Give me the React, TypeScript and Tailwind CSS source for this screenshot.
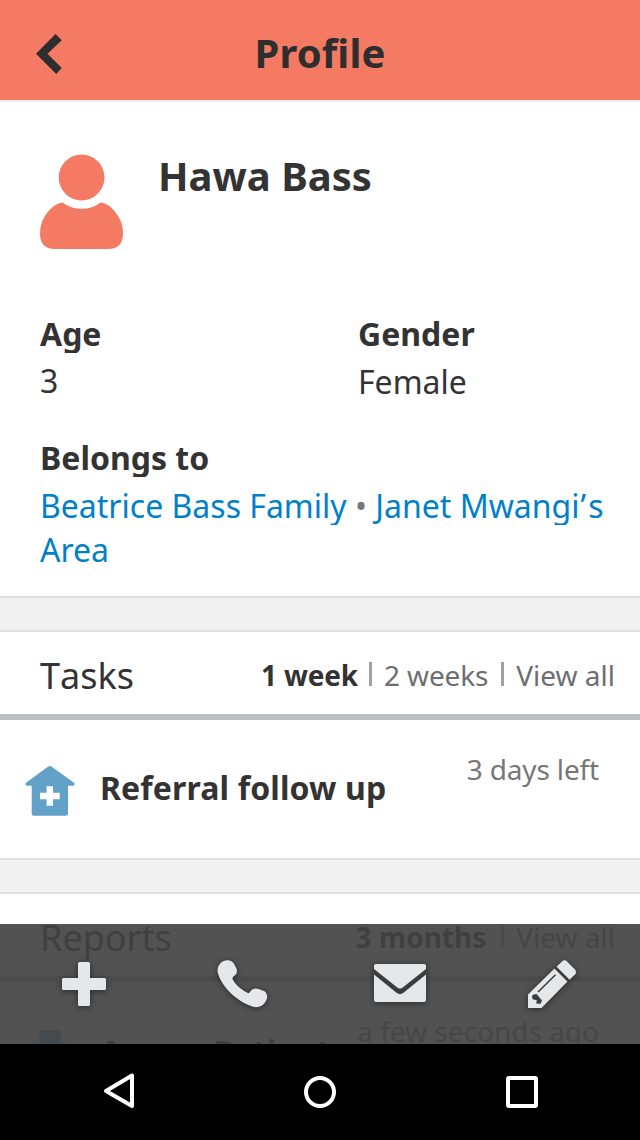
import React from "react";

function BackIcon() {
  return (
    <svg width="26" height="40" viewBox="36 34 26 40" fill="#2e2e2e">
      <path d="M55.5 34 L61.8 40.2 L47.5 53.7 L61.8 68 L56.2 74 L36 53.7 Z" />
    </svg>
  );
}

function PersonIcon() {
  return (
    <svg width="84" height="95" viewBox="40 154 84 95" fill="#f47a63">
      <circle cx="81.6" cy="177.5" r="22.9" />
      <path d="M62.5 202.5 Q71 208.8 81.6 208.8 Q92.5 208.8 100.5 202.5 Q108 203 114.5 211 Q123 221 123 233 C123 244 118 249 108 249 L55 249 C45 249 40 244 40 233 Q40 221 48.500 211 Q55.500 203 62.500 202.500 Z" />
    </svg>
  );
}

function HouseIcon() {
  return (
    <svg width="50" height="50" viewBox="25 766 50 50" fill="#63a2c8">
      <path
        fillRule="evenodd"
        d="M48.200 766.500 Q49.800 765.500 51.400 766.500 L74 782.800 Q75.600 784.800 73 785.700 L68 785.700 L68 813.500 Q68 815.700 65.800 815.700 L34 815.700 Q31.700 815.700 31.700 813.500 L31.700 785.700 L27 785.700 Q24.400 784.800 26 782.800 Z M46.600 786.300 V792.700 H40 V799.300 H46.600 V805.700 H53 V799.300 H59.700 V792.700 H53 V786.300 Z"
      />
    </svg>
  );
}

function CrossIcon() {
  return (
    <svg width="50" height="50" viewBox="0 0 50 50" fill="#63a2c8">
      <path d="M16 0 H34 Q36 0 36 3 V13.500 H46 Q48 13.500 48 16 V33 Q48 36 46 36 H36 V47 Q36 50 34 50 H16 Q14.300 50 14.300 47 V36 H4 Q2 36 2 33 V16 Q2 13.500 4 13.500 H14.300 V3 Q14.300 0 16 0 Z" />
    </svg>
  );
}

function Heading({ children }: { children: React.ReactNode }) {
  return <div className="h-[38px] overflow-hidden text-[32px] leading-[38px] font-bold">{children}</div>;
}

function Divider() {
  return <div className="h-9 shrink-0 border-y-2 border-[#e0e0e0] bg-[#f1f1f1]" />;
}

function Bar() {
  return <span className="mb-[2px] h-6 w-[3px] bg-[#a0a1a3]" />;
}

const shadow = "overflow-visible drop-shadow-[0_1px_3px_rgba(0,0,0,0.5)]";

function ActionBar() {
  return (
    <div className="absolute inset-x-0 bottom-0 grid h-[120px] grid-cols-[168px_148px_168px_1fr] bg-[#414141]/91">
      <div className="flex justify-center pt-[38px]">
        <svg className={shadow} width="44" height="44" viewBox="0 0 44 44" fill="#e6e7e8">
          <path d="M17.500 0 H26.500 Q28 0 28 1.500 V16 H42.500 Q44 16 44 17.500 V26.500 Q44 28 42.500 28 H28 V42.500 Q28 44 26.500 44 H17.500 Q16 44 16 42.500 V28 H1.500 Q0 28 0 26.500 V17.500 Q0 16 1.500 16 H16 V1.500 Q16 0 17.500 0 Z" />
        </svg>
      </div>
      <div className="flex justify-center pt-9">
        <svg className={shadow} width="50" height="48" viewBox="217 960 50 48" fill="#e6e7e8">
          <path d="M226.500 960.300 Q231 959.500 233.500 963 L236.200 968 Q238 972 235.500 974.800 Q233 976.600 232.300 978.500 C235 984.500 241.500 990 248.500 993.200 Q250 992.500 251.500 990 Q254.500 987.600 258.500 989 L264.500 991.300 Q267.800 993.300 267 998 C265.500 1004.500 259.500 1008.500 253 1006.800 C236 1001 221.500 986.500 217.800 972.800 C216.500 966 221 961 226.500 960.300 Z" />
        </svg>
      </div>
      <div className="flex justify-center pt-10">
        <svg className={shadow} width="52" height="38" viewBox="0 0 52 38">
          <path d="M2 0 H50 Q52 0 52 2 V36 Q52 38 50 38 H2 Q0 38 0 36 V2 Q0 0 2 0 Z" fill="#3c3c3c" />
          <path d="M2 0 H50 Q52 0 52 2 V5 L29 23.200 Q26 25.600 23 23.200 L0 5 V2 Q0 0 2 0 Z" fill="#e6e7e8" />
          <path d="M0 10.500 L22.500 28.800 Q26 31.500 29.500 28.800 L52 10.500 V36 Q52 38 50 38 H2 Q0 38 0 36 Z" fill="#e6e7e8" />
        </svg>
      </div>
      <div className="flex pt-9 pl-[44px]">
        <svg className={shadow} width="48" height="48" viewBox="0 0 48 48">
          <path d="M0 34.500 L26.500 8.500 L39.500 21.500 L13.500 48 H0 Z" fill="#e6e7e8" />
          <path d="M28.500 6.800 L34 1.500 Q36.500 -0.800 39 1.500 L46.500 9 Q49.200 12 47 14.500 L41.500 19.800 Z" fill="#e6e7e8" />
          <path d="M27.500 7.500 L40.500 20.700" stroke="#3c3c3c" strokeWidth="2" />
          <path d="M10 32 L27.500 14.700" stroke="#3c3c3c" strokeWidth="1.600" />
          <path d="M4 36 L5.500 34.500 L8.500 34 L14 40.500 L12.500 43.700 L8.200 43.500 L8.800 40.300 L4.500 39.300 Z" fill="#3c3c3c" />
        </svg>
      </div>
    </div>
  );
}

function SystemNav() {
  return (
    <nav className="flex h-24 shrink-0 items-start bg-black pt-7">
      <svg width="640" height="40" viewBox="0 1072 640 40" fill="none" stroke="#fff" strokeWidth="4">
        <path d="M132 1075.500 V1106 L106 1091 Z" strokeLinejoin="round" />
        <circle cx="320" cy="1092" r="14" />
        <rect x="508" y="1078" width="28" height="28" rx="1" />
      </svg>
    </nav>
  );
}

export default function App() {
  return (
    <div className="flex h-[1140px] w-[640px] flex-col overflow-hidden bg-white font-['Noto_Sans',sans-serif] text-[#333]">
      <main className="relative flex min-h-0 flex-1 flex-col overflow-hidden">
        <header className="grid h-[102px] shrink-0 grid-cols-[1fr_auto_1fr] border-b-2 border-[#f1f1f1] bg-[#f47a63] text-[#2e2e2e]">
          <div className="pt-[34px] pl-9">
            <BackIcon />
          </div>
          <h1 className="pt-[23px] text-[40px] leading-[60px] font-bold tracking-[0.1px]">Profile</h1>
        </header>

        <section className="h-[494px] shrink-0 pr-5 pl-10">
          <div className="flex h-[213px] gap-[34px] pt-[52px]">
            <PersonIcon />
            <h2 className="-mt-2 text-[40px] leading-[60px] font-bold">Hawa Bass</h2>
          </div>
          <div className="grid h-[124px] grid-cols-[318px_1fr]">
            <div>
              <Heading>Age</Heading>
              <div className="pt-[6px] text-[32px] leading-[44px]">3</div>
            </div>
            <div>
              <Heading>Gender</Heading>
              <div className="pt-[7px] text-[32px] leading-[44px]">Female</div>
            </div>
          </div>
          <Heading>Belongs to</Heading>
          <div className="pt-[7px] text-[32px] leading-[44px] whitespace-nowrap text-[#0080c9]">
            <div className="mb-[3px] h-[41px] overflow-hidden">
              Beatrice Bass Family <span className="text-[#777]">•</span> Janet{" "}
              <span className="[font-kerning:none]">
                Mwangi<span className="ml-px mr-[2px]">’</span>s
              </span>
            </div>
            <div>Area</div>
          </div>
        </section>

        <Divider />
        <div className="flex h-[88px] shrink-0 items-center border-b-[6px] border-[#bcbec0] pt-1 pr-[25px] pl-10">
          <h3 className="flex-1 pt-[2px] text-[36px] leading-[50px] [font-kerning:none]">Tasks</h3>
          <div className="flex items-center text-[28px] leading-[40px] text-[#6d6e71]">
            <b className="pr-[11px] tracking-[-0.15px] text-[#333]">1 week</b>
            <Bar />
            <span className="pr-[13px] pl-[12px] tracking-[-0.15px]">2 weeks</span>
            <Bar />
            <span className="pl-[12px]">View all</span>
          </div>
        </div>
        <div className="flex h-[138px] shrink-0 pr-[41px] pl-[25px]">
          <div className="pt-[46px]">
            <HouseIcon />
          </div>
          <div className="flex-1 pt-[46px] pl-[25px] text-[32px] leading-[44px] font-bold tracking-[0.12px]">Referral follow up</div>
          <div className="pt-[29px] text-[28px] leading-[40px] tracking-[-0.15px] text-[#777]">3 days left</div>
        </div>

        <Divider />
        <div className="flex h-[88px] shrink-0 items-center border-b-[6px] border-[#bcbec0] pt-1 pr-[25px] pl-10">
          <h3 className="flex-1 pt-[2px] text-[36px] leading-[50px]">Reports</h3>
          <div className="flex items-center text-[28px] leading-[40px] text-[#6d6e71]">
            <b className="pr-[15px] text-[#333]">3 months</b>
            <Bar />
            <span className="pl-[12px]">View all</span>
          </div>
        </div>
        <div className="flex h-[138px] shrink-0 pr-[41px] pl-[25px]">
          <div className="pt-12">
            <CrossIcon />
          </div>
          <div className="flex-1 pt-[48px] pl-[25px] text-[32px] leading-[44px] font-bold">Assess Patient</div>
          <div className="pt-[29px] text-[28px] leading-[40px] text-[#777]">a few seconds ago</div>
        </div>
        <ActionBar />
      </main>
      <SystemNav />
    </div>
  );
}
